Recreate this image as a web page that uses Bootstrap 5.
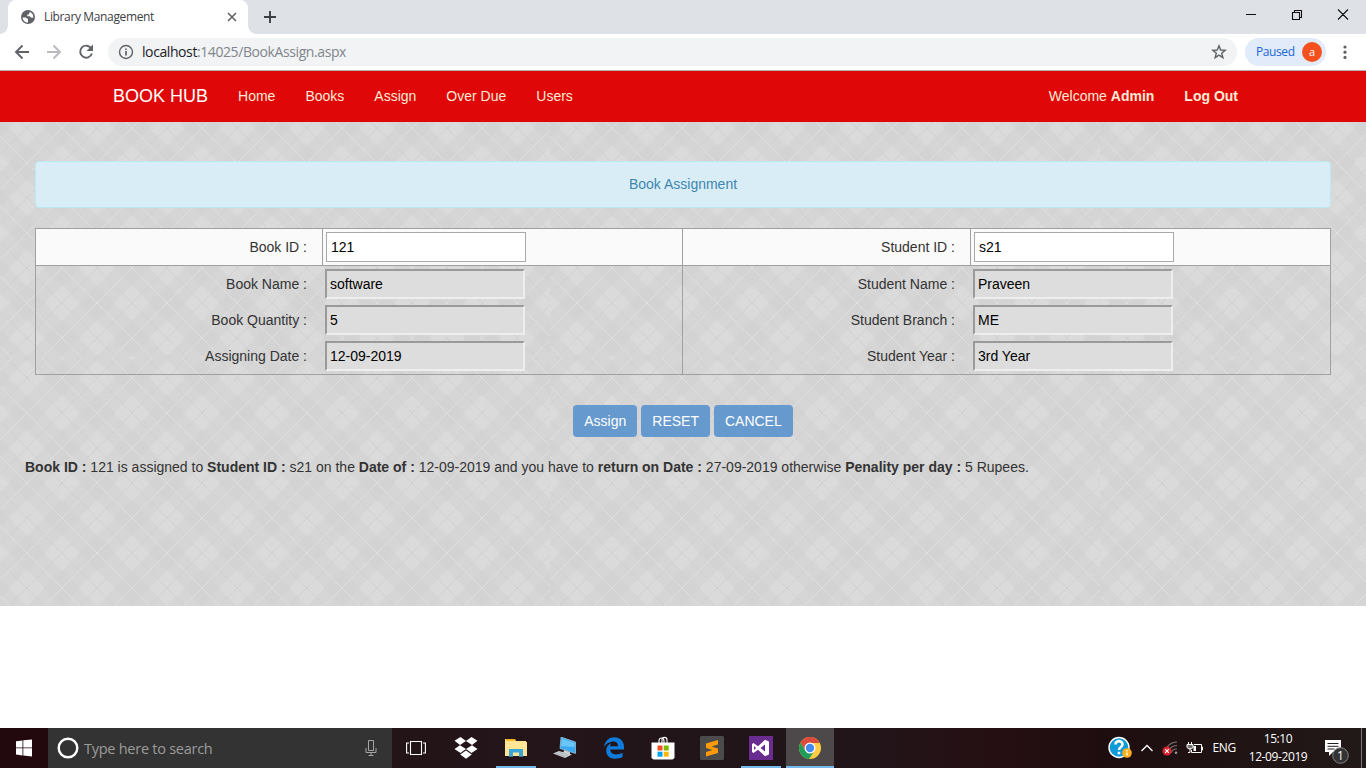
<!DOCTYPE html>
<html lang="en">
<head>
<meta charset="utf-8">
<meta name="viewport" content="width=device-width, initial-scale=1">
<title>Library Management</title>
<link rel="stylesheet" href="https://cdn.jsdelivr.net/npm/bootstrap@5.3.0/dist/css/bootstrap.min.css">
<style>
html, body { height: 768px; overflow: hidden; }
body { font-family: "Liberation Sans", Arial, sans-serif; font-size: 14px; line-height: 20px; color: #333; background: #fff; }
svg { display: block; flex: none; }
.ui { font-family: "Open Sans", "Segoe UI", sans-serif; }
/* browser frame */
.tabstrip { height: 34px; background: #dee1e6; padding-left: 8px; }
.tab-active { width: 240px; background: #fff; border-radius: 8px 8px 0 0; font-size: 12px; line-height: 34px; color: #3c4043; padding: 0 10px 0 13px; position: relative; }
.tab-active::before, .tab-active::after { content: ""; position: absolute; bottom: 0; width: 8px; height: 8px; }
.tab-active::before { left: -8px; background: radial-gradient(circle at 0 0, #dee1e6 7.5px, #fff 8px); }
.tab-active::after { right: -8px; background: radial-gradient(circle at 100% 0, #dee1e6 7.5px, #fff 8px); }
.tab-title { margin-left: 9px; letter-spacing: -.36px; }
.toolbar { height: 37px; border-bottom: 1px solid #b1b1b1; padding: 0 13px 0 14px; }
.omnibox { height: 28px; border-radius: 14px; background: #f1f3f4; padding: 0 10px; margin-left: 14px; font-size: 14px; color: #80868b; }
.address { margin-left: 8px; letter-spacing: -.41px; }
.address b { font-weight: 400; color: #202124; }
.paused { width: 81px; height: 28px; border-radius: 14px; background: #e1ebfa; color: #1a66d6; font-size: 12px; margin: 0 17px 0 8px; padding: 0 4px 0 11px; }
.paused span:first-child { letter-spacing: -.4px; }
.avatar { width: 20px; height: 20px; border-radius: 50%; background: #f4511e; color: #fff; text-align: center; line-height: 19px; font-size: 11px; }
/* site */
.sitebar { height: 51px; background: #df0707; padding: 0 112px 1px 113px; color: antiquewhite; }
.sitebar .nav-link { padding: 0; margin-left: 30px; color: antiquewhite; line-height: 20px; }
.brand-name { font-size: 18px; color: #fff; text-decoration: none; }
.plaid { height: 484px; padding: 40px 25px 0; background: #d5d5d5 0 -85px / 550px 320px url("data:image/svg+xml,%3Csvg xmlns='http://www.w3.org/2000/svg' width='550' height='320'%3E%3Cdefs%3E%3Cpattern id='p' width='70' height='70' patternUnits='userSpaceOnUse' patternTransform='translate(27 21)'%3E%3Crect width='70' height='70' fill='%23d6d6d6'/%3E%3Cg fill='%23dbdbdb'%3E%3Cpath d='M0-18L18 0L0 18L-18 0ZM70-18L88 0L70 18L52 0ZM0 52L18 70L0 88L-18 70ZM70 52L88 70L70 88L52 70ZM35 17L53 35L35 53L17 35Z'/%3E%3C/g%3E%3Cpath fill='%23d3d3d3' d='M35-18L53 0L35 18L17 0ZM35 52L53 70L35 88L17 70ZM0 17L18 35L0 53L-18 35ZM70 17L88 35L70 53L52 35Z'/%3E%3Cpath d='M0 0L70 70M70 0L0 70' stroke='%23cbcbcb' stroke-width='.7'/%3E%3Cpath d='M35 0L0 35L35 70L70 35Z' fill='none' stroke='%23e0e0e0' stroke-width='.9'/%3E%3C/pattern%3E%3Cfilter id='n' x='0' y='0' width='1' height='1'%3E%3CfeTurbulence type='fractalNoise' baseFrequency='.8' numOctaves='2'/%3E%3CfeColorMatrix type='saturate' values='0'/%3E%3C/filter%3E%3C/defs%3E%3Crect width='550' height='320' fill='url(%23p)'/%3E%3Crect width='550' height='320' filter='url(%23n)' opacity='.02'/%3E%3C/svg%3E"); }
.notice { height: 47px; margin: -1px 10px 20px; padding: 12px; background: #d9edf7; border: 1px solid #bce8f1; border-radius: 4px; color: #3d87ad; text-align: center; }
.assign-grid { margin: 0 10px; width: 1296px; border: 1px solid #a0a0a0; display: grid; grid-template-columns: 646px 648px; }
.half-head { height: 37px; background: #fafafa; border-bottom: 1px solid #a0a0a0; display: grid; grid-template-columns: 287px 1fr; }
.half-body { height: 108px; }
.half + .half { border-left: 1px solid #a0a0a0; }
.half + .half .half-head, .half + .half .half-row { grid-template-columns: 288px 1fr; }
.half-head label { border-right: 1px solid #a0a0a0; }
.half label { text-align: right; padding-right: 16px; line-height: 36px; }
.half .half-head label { padding-right: 15px; }
.half-row { height: 36px; display: grid; grid-template-columns: 287px 1fr; }
.half input { width: 200px; height: 30px; margin: 3px 0 0 3px; border: 1px solid #a9a9a9; padding: 1px 4px; color: #000; background: #fff; border-radius: 0; line-height: normal; font-size: 14px; }
.half-row input { margin-left: 2px; border: 2px solid; border-color: #9a9a9a #eee #eee #9a9a9a; background: #ddd; padding: 1px 3px; }
.act { height: 32px; padding: 0 11px; font-size: 14px; line-height: 32px; background: #6699cd; color: #fff; border: 0; border-radius: 4px; }
/* taskbar */
.taskbar { height: 40px; background: linear-gradient(90deg, #22090e 0, #22090e 48px, #231418 400px, #21151a 860px, #260f12 1000px, #1e0d0f 1100px, #211918 1366px); color: #fff; font-size: 12px; }
.searchbox { width: 344px; height: 40px; background: #333; color: #9b9b9b; font-size: 14.5px; padding: 0 15px 0 9px; }
.searchbox span { margin: 1px 0 0 5px; letter-spacing: -.26px; }
.task { width: 49px; height: 40px; display: grid; place-items: center; }
.task.open { background: linear-gradient(#76b9ed, #76b9ed) 50% 100% / 40px 2px no-repeat; }
.task.current { width: 48px; margin-left: 1px; background: linear-gradient(#76b9ed, #76b9ed) 0 100% / 48px 2px no-repeat, #4d484a; }
.clock { line-height: 18px; text-align: center; letter-spacing: -.4px; width: 60px; white-space: nowrap; }
</style>
</head>
<body class="d-flex flex-column">
<div class="tabstrip ui d-flex">
  <div class="tab-active d-flex align-items-center">
    <svg width="14" height="14" viewBox="0 0 14 14"><circle cx="7" cy="7" r="7" fill="#5f6368"/><path d="M1.600 7.400H4.500C5.800 7.400 5.600 8.800 7 8.800V12.400C4 12.400 1.700 10.300 1.600 7.400ZM8.600 1.900C11.500 2.600 12.800 5.500 12.200 8.200C11.500 7.300 10.800 7.400 9.600 7.400C9.400 5.800 8.600 6.200 6.300 6.200V4.500H8V3.200H8.600Z" fill="#fff"/></svg>
    <span class="tab-title">Library Management</span>
    <svg class="ms-auto" width="12" height="12" viewBox="0 0 12 12"><path d="M2 2L10 10M10 2L2 10" stroke="#5f6368" stroke-width="1.6"/></svg>
  </div>
  <svg style="margin:11px 0 0 16px" width="12" height="12" viewBox="0 0 12 12"><path d="M6 0V12M0 6H12" stroke="#3c4043" stroke-width="1.9"/></svg>
  <svg class="ms-auto" width="120" height="34" viewBox="0 0 120 34"><path d="M0 14.5H10M46.5 12.5H53.5V19.500H46.500ZM48.500 12.500V10.500H55.500V17.500H53.500M92 9.500L102 19.500M102 9.500L92 19.500" fill="none" stroke="#111" stroke-width="1.100"/></svg>
</div>
<div class="toolbar ui d-flex align-items-center">
  <svg width="80" height="24" viewBox="0 0 80 24" fill="none" stroke="#5f6368" stroke-width="1.900"><path d="M15 12H2.500M8.500 5.500L2 12L8.500 18.500"/><path d="M33 12H45.500M39.500 5.500L46 12L39.500 18.500" stroke="#b8babd"/><path d="M77.300 8.500A6 6 0 1 0 77.900 13.500"/><path d="M79 4.500V11H72.500Z" fill="#5f6368" stroke="none"/></svg>
  <div class="omnibox flex-grow-1 d-flex align-items-center">
    <svg width="16" height="16" viewBox="0 0 16 16"><circle cx="8" cy="8" r="6.500" fill="none" stroke="#5f6368" stroke-width="1.400"/><path d="M8 7V11.500M8 4.500V6" stroke="#5f6368" stroke-width="1.700"/></svg>
    <span class="address"><b>localhost</b>:14025/BookAssign.aspx</span>
    <svg class="ms-auto" width="16" height="16" viewBox="0 0 16 16"><path d="M8 1.800L9.700 6L14.200 6.300L10.700 9.200L11.900 13.700L8 11.200L4.100 13.700L5.300 9.200L1.800 6.300L6.300 6Z" fill="none" stroke="#5f6368" stroke-width="1.400"/></svg>
  </div>
  <div class="paused d-flex align-items-center justify-content-between"><span>Paused</span><span class="avatar">a</span></div>
  <svg width="4" height="16" viewBox="0 0 4 16" fill="#5f6368" style="margin-right:6px"><circle cx="2" cy="3" r="1.600"/><circle cx="2" cy="8.200" r="1.600"/><circle cx="2" cy="13.400" r="1.600"/></svg>
</div>

<nav class="sitebar d-flex align-items-center">
  <a class="brand-name" href="#">BOOK HUB</a>
  <a class="nav-link" href="#">Home</a>
  <a class="nav-link" href="#">Books</a>
  <a class="nav-link" href="#">Assign</a>
  <a class="nav-link" href="#">Over Due</a>
  <a class="nav-link" href="#">Users</a>
  <a class="nav-link ms-auto" href="#">Welcome <b>Admin</b></a>
  <a class="nav-link me-3" href="#"><b>Log Out</b></a>
</nav>
<main class="plaid">
  <div class="notice">Book Assignment</div>
  <form class="assign-grid">
    <div class="half">
      <div class="half-head"><label for="bid">Book ID :</label><input id="bid" value="121"></div>
      <div class="half-body">
        <div class="half-row"><label for="bname">Book Name :</label><input id="bname" value="software" readonly></div>
        <div class="half-row"><label for="bqty">Book Quantity :</label><input id="bqty" value="5" readonly></div>
        <div class="half-row"><label for="bdate">Assigning Date :</label><input id="bdate" value="12-09-2019" readonly></div>
      </div>
    </div>
    <div class="half">
      <div class="half-head"><label for="sid">Student ID :</label><input id="sid" value="s21"></div>
      <div class="half-body">
        <div class="half-row"><label for="sname">Student Name :</label><input id="sname" value="Praveen" readonly></div>
        <div class="half-row"><label for="sbranch">Student Branch :</label><input id="sbranch" value="ME" readonly></div>
        <div class="half-row"><label for="syear">Student Year :</label><input id="syear" value="3rd Year" readonly></div>
      </div>
    </div>
  </form>
  <div class="d-flex justify-content-center gap-1" style="margin-top:30px">
    <button class="act" type="button">Assign</button>
    <button class="act" type="button">RESET</button>
    <button class="act" type="button">CANCEL</button>
  </div>
  <div style="margin-top:20px"><b>Book ID :</b> 121 is assigned to <b>Student ID :</b> s21 on the <b>Date of :</b> 12-09-2019 and you have to <b>return on Date :</b> 27-09-2019 otherwise <b>Penality per day :</b> 5 Rupees.</div>
</main>

<footer class="taskbar ui d-flex align-items-center mt-auto">
  <svg width="48" height="40" viewBox="0 0 48 40" fill="#fff"><path d="M16 13.300L22.500 12.400V19.500H16ZM23.300 12.300L32 11.500V19.500H23.300ZM16 20.300H22.500V27.400L16 26.500ZM23.300 20.300H32V28.500L23.300 27.500Z"/></svg>
  <div class="searchbox d-flex align-items-center">
    <svg width="22" height="22" viewBox="0 0 22 22"><circle cx="11" cy="11" r="9.300" fill="none" stroke="#fff" stroke-width="2.400"/></svg>
    <span>Type here to search</span>
    <svg class="ms-auto" width="12" height="18" viewBox="0 0 12 18" fill="none" stroke="#a5a5a5" stroke-width="1"><path d="M3.500 1.500H8.500V11.500H3.500ZM1 9V13.500H11V9M6 13.500V16.500M3.500 16.500H8.500"/></svg>
  </div>
  <div class="task" style="width:48px"><svg width="20" height="16" viewBox="0 0 20 16" fill="none" stroke="#fff" stroke-width="1.100"><path d="M4.500 1.500H15.500V14.500H4.500ZM3 3H.600V13H3M17 3H19.400V13H17"/></svg></div>
  <div class="task" style="width:52px"><svg width="24" height="24" viewBox="0 0 24 24" fill="#fff"><path d="M6.500 1L12 5L6 9L.500 4.800ZM17.500 1L23.500 4.800L18 9L12 5ZM.500 13L6 9.200L12 13L6.500 17ZM12 13L18 9.200L23.500 13L17.500 17ZM6.200 18.400L12 14.500L17.800 18.400L12 22.800Z"/></svg></div>
  <div class="task open" style="width:48px"><svg width="22" height="20" viewBox="0 0 22 20"><path d="M0 1H10L11 3H21V18H0Z" fill="#ffe492"/><path d="M1 1H10V2.800H1Z" fill="#eeb21c"/><path d="M0 4H22V18H0Z" fill="#ffe594"/><path d="M4 18.800V11H18V18.800H14V14.500H8V18.800Z" fill="#3aa5d8"/></svg></div>
  <div class="task"><svg width="24" height="22" viewBox="0 0 24 22"><path d="M8 0L22.500 5V16.500L7 11.500Z" fill="#39a9f0" stroke="#b7dcf3" stroke-width=".600"/><path d="M9 1.500L21.500 6V10L8 9Z" fill="#6dc6fa"/><path d="M11 13L17 15V17.500H10ZM0 16.500L6 14L19 17.500L12 21Z" fill="#c8ced2"/><path d="M3 16.500L12 19.500M6 15.200L15 18.200" stroke="#9aa3a8" stroke-width=".700"/></svg></div>
  <div class="task"><svg width="22" height="22" viewBox="0 0 22 22"><path d="M1 10C2 3.500 6.400 .300 11.500 .300C17.400 .300 21 4.600 21 10V12.600H7.200C7.500 16 9.700 17.500 13 17.500C15.500 17.500 17.500 17 19.600 15.800V20C17.600 21.200 15 21.700 12 21.700C6.700 21.700 3.200 18.400 3.200 13.700C3.200 10.300 5 7.700 8 6.300C7.500 7.300 7.200 8.200 7.200 9.200H15C15 6.300 13.500 4.400 10.300 4.400C6.700 4.400 3 6.600 1 10Z" fill="#0f7bdc"/></svg></div>
  <div class="task"><svg width="24" height="24" viewBox="0 0 24 24"><path d="M8 8V5C8 1 13 1 13 5V7M11 7V4C11 .500 16 .500 16 4V8" fill="none" stroke="#fff" stroke-width="1.100"/><path d="M.500 6.500H23.500V22L21.500 23.500H2.500L.500 22Z" fill="#fff"/><path d="M6.500 9.500H11.500V14.500H6.500Z" fill="#f25022"/><path d="M12.700 9.500H17.700V14.500H12.700Z" fill="#7fba00"/><path d="M6.500 15.700H11.500V20.700H6.500Z" fill="#00a4ef"/><path d="M12.700 15.700H17.700V20.700H12.700Z" fill="#ffb900"/></svg></div>
  <div class="task"><svg width="24" height="24" viewBox="0 0 24 24"><rect width="24" height="24" rx="1.500" fill="#4b4b4b"/><path d="M18 4V8.600L11.500 10.600L18 12.600V17L6 20.500V16L12.500 14L6 12V7.500Z" fill="#ff9b0a"/></svg></div>
  <div class="task open"><svg width="24" height="24" viewBox="0 0 24 24"><rect width="24" height="24" fill="#6b2c91"/><path fill-rule="evenodd" d="M4.500 7L9 10.300L16 3.800L20 5.500V18.500L16 20.200L9 13.700L4.500 17L3 16V8ZM5 10V14L7 12ZM16 8.500L11.500 12L16 15.500Z" fill="#fff"/></svg></div>
  <div class="task current"><svg width="22" height="22" viewBox="0 0 22 22"><circle cx="11" cy="11" r="11" fill="#fc4"/><path d="M11 11L6.200 13.700L1.500 5.500A11 11 0 0 1 20.500 5.500L20.600 6H11Z" fill="#dc4a3d"/><path d="M1.500 5.500A11 11 0 0 0 10 22L15.500 13.800L11 11L6.200 13.700Z" fill="#1f9d5a"/><circle cx="11" cy="11" r="5.500" fill="#fff"/><circle cx="11" cy="11" r="4.200" fill="#4688f1"/></svg></div>
  <div class="d-flex align-items-center ms-auto">
    <svg width="24" height="24" viewBox="0 0 24 24"><circle cx="11" cy="11.500" r="10" fill="#0d9bd8" stroke="#fff" stroke-width="1.400"/><path d="M7.500 8.500C7.500 4 14.500 4 14.500 8.500C14.500 11 11 11 11 14M11 15.800V18.300" fill="none" stroke="#fff" stroke-width="2.600"/><circle cx="19" cy="17" r="4.800" fill="#fbb01d"/><path d="M19 16.500V19.500M19 14V15.400" stroke="#fff" stroke-width="1.300"/></svg>
    <svg style="margin-left:8px" width="14" height="10" viewBox="0 0 14 10"><path d="M1.500 8L7 2.500L12.500 8" fill="none" stroke="#fff" stroke-width="1.300"/></svg>
    <svg style="margin-left:8px" width="18" height="16" viewBox="0 0 18 16"><g fill="none" stroke="#77706f" stroke-width="1.200"><path d="M3 13A12 12 0 0 1 15 2M6 13A9 9 0 0 1 15 5.500M9 13A6 6 0 0 1 15 9"/></g><circle cx="14" cy="12.800" r="1.300" fill="#999"/><circle cx="5" cy="11" r="4.500" fill="#d9232e"/><path d="M3.200 9.200L6.800 12.800M6.800 9.200L3.200 12.800" stroke="#fff" stroke-width="1.200"/></svg>
    <svg style="margin-left:6px" width="18" height="12" viewBox="0 0 18 12" fill="none" stroke="#fff" stroke-width="1"><path d="M8 2.500H15.500V10.500H5.500V8M15.500 5H16.500V8H15.500M2.500 0V2.500M5.500 0V2.500M4 6.500V10.500H2"/><path d="M1 2.500H7V5C7 7.500 1 7.500 1 5Z" fill="#fff" fill-opacity=".4"/><path d="M7.500 4H10V9H7.500Z" fill="#fff" stroke="none"/></svg>
    <span style="margin-left:8px;letter-spacing:-.3px">ENG</span>
    <div class="clock" style="margin-left:12px">15:10<br>12-09-2019</div>
    <svg style="margin-left:16px" width="42" height="40" viewBox="0 0 42 40"><path d="M1 12H17V24H9L5 28V24H1Z" fill="#fff"/><path d="M3.500 15.500H14.500M3.500 18.300H14.500M3.500 21H10.500" stroke="#222"/><circle cx="16.500" cy="27.500" r="7.800" fill="#333" stroke="#858585"/><path d="M37.500 0V40" stroke="#777"/><text x="16.500" y="32" text-anchor="middle" font-size="12" fill="#fff">1</text></svg>
  </div>
</footer>
<script src="https://cdn.jsdelivr.net/npm/bootstrap@5.3.0/dist/js/bootstrap.bundle.min.js"></script>
</body>
</html>
